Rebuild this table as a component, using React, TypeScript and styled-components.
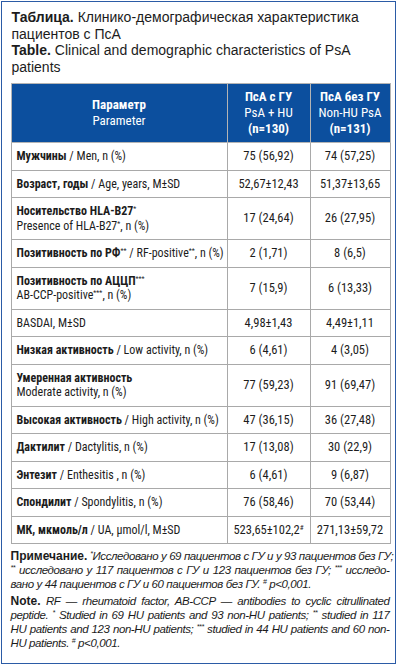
import React from 'react'
import styled, { createGlobalStyle } from 'styled-components'

const GlobalStyle = createGlobalStyle`
  html, body {
    margin: 0;
    padding: 0;
    background: #ffffff;
  }
  body {
    font-family: "Liberation Sans", Arial, sans-serif;
    color: #1c1c1c;
  }
`

const Frame = styled.div`
  box-sizing: border-box;
  width: 395px;
  margin: 1px 0 0 1px;
  border: 1.5px solid #2b5ba6;
  padding: 7px 4.5px 10px 8.5px;
`

const Caption = styled.p`
  margin: 0 0 0 1px;
  font-size: 14px;
  line-height: 16.5px;

  b {
    font-weight: 700;
  }
`

const DataTable = styled.table`
  width: 379px;
  margin-top: 8px;
  table-layout: fixed;
  border-collapse: collapse;
  font-family: "Roboto Condensed", "Open Sans", Roboto, sans-serif;
  font-stretch: 75%;
  font-size: 12.5px;
`

const HeadCell = styled.th`
  background: #0c4f9e;
  color: #ffffff;
  border: 1px solid #b4b4b4;
  padding: 5px 4px;
  font-size: 13px;
  line-height: 16px;
  font-weight: 400;
  text-align: center;
  vertical-align: middle;
  white-space: nowrap;

  b {
    font-weight: 700;
  }
`

const Row = styled.tr``

const LabelCell = styled.td`
  border: 1px solid #a9a9a9;
  padding: 6px 5px;
  font-size: 12px;
  line-height: 14.5px;
  text-align: left;
  vertical-align: middle;
  white-space: nowrap;

  b {
    font-weight: 700;
  }
`

const ValueCell = styled.td`
  border: 1px solid #a9a9a9;
  padding: 6px 2px;
  line-height: 14.5px;
  text-align: center;
  vertical-align: middle;
  white-space: nowrap;
`

const Star = styled.sup`
  font-size: 7px;
  line-height: 0;
  vertical-align: 4px;
`

const Notes = styled.div`
  width: 379px;
  margin-top: 5px;
  font-size: 11.5px;
  letter-spacing: -0.4px;
  line-height: 14px;
`

const NotePara = styled.div`
  margin-bottom: 3px;

  b {
    font-style: normal;
    font-weight: 700;
    font-size: 12px;
    letter-spacing: 0;
  }
`

const NoteLine = styled.div<{ $last?: boolean }>`
  font-style: italic;
  text-align: ${p => (p.$last ? 'left' : 'justify')};
  text-align-last: ${p => (p.$last ? 'left' : 'justify')};
  white-space: nowrap;
`

type DataRow = {
  label: React.ReactNode
  a: React.ReactNode
  b: React.ReactNode
}

const rows: DataRow[] = [
  { label: <><b>Мужчины</b> / Men, n (%)</>, a: '75 (56,92)', b: '74 (57,25)' },
  { label: <><b>Возраст, годы</b> / Age, years, M±SD</>, a: '52,67±12,43', b: '51,37±13,65' },
  {
    label: (
      <>
        <b>Носительство HLA-B27</b><Star>*</Star>
        <br />
        Presence of HLA-B27<Star>*</Star>, n (%)
      </>
    ),
    a: '17 (24,64)',
    b: '26 (27,95)',
  },
  {
    label: <><b>Позитивность по РФ</b><Star>**</Star> / RF-positive<Star>**</Star>, n (%)</>,
    a: '2 (1,71)',
    b: '8 (6,5)',
  },
  {
    label: (
      <>
        <b>Позитивность по АЦЦП</b><Star>***</Star>
        <br />
        AB-CCP-positive<Star>***</Star>, n (%)
      </>
    ),
    a: '7 (15,9)',
    b: '6 (13,33)',
  },
  { label: 'BASDAI, M±SD', a: '4,98±1,43', b: '4,49±1,11' },
  { label: <><b>Низкая активность</b> / Low activity, n (%)</>, a: '6 (4,61)', b: '4 (3,05)' },
  {
    label: (
      <>
        <b>Умеренная активность</b>
        <br />
        Moderate activity, n (%)
      </>
    ),
    a: '77 (59,23)',
    b: '91 (69,47)',
  },
  { label: <><b>Высокая активность</b> / High activity, n (%)</>, a: '47 (36,15)', b: '36 (27,48)' },
  { label: <><b>Дактилит</b> / Dactylitis, n (%)</>, a: '17 (13,08)', b: '30 (22,9)' },
  { label: <><b>Энтезит</b> / Enthesitis , n (%)</>, a: '6 (4,61)', b: '9 (6,87)' },
  { label: <><b>Спондилит</b> / Spondylitis, n (%)</>, a: '76 (58,46)', b: '70 (53,44)' },
  {
    label: <><b>МК, мкмоль/л</b> / UA, μmol/l, M±SD</>,
    a: <>523,65±102,2<Star>#</Star></>,
    b: '271,13±59,72',
  },
]

const App: React.FC = () => {
  return (
    <>
      <GlobalStyle />
      <Frame>
        <Caption>
          <b>Таблица.</b> Клинико-демографическая характеристика пациентов с ПсА
        </Caption>
        <Caption>
          <b>Table.</b> Clinical and demographic characteristics of PsA patients
        </Caption>

        <DataTable>
          <colgroup>
            <col style={{ width: 216 }} />
            <col style={{ width: 83 }} />
            <col style={{ width: 80 }} />
          </colgroup>
          <thead>
            <tr>
              <HeadCell>
                <b>Параметр</b>
                <br />
                Parameter
              </HeadCell>
              <HeadCell>
                <b>ПсА с ГУ</b>
                <br />
                PsA + HU
                <br />
                <b>(n=130)</b>
              </HeadCell>
              <HeadCell>
                <b>ПсА без ГУ</b>
                <br />
                Non-HU PsA
                <br />
                <b>(n=131)</b>
              </HeadCell>
            </tr>
          </thead>
          <tbody>
            {rows.map((r, i) => (
              <Row key={i}>
                <LabelCell>{r.label}</LabelCell>
                <ValueCell>{r.a}</ValueCell>
                <ValueCell>{r.b}</ValueCell>
              </Row>
            ))}
          </tbody>
        </DataTable>

        <Notes>
          <NotePara>
            <NoteLine>
              <b>Примечание.</b> <Star>*</Star>Исследовано у 69 пациентов с ГУ и у 93 пациентов без ГУ;
            </NoteLine>
            <NoteLine>
              <Star>**</Star> исследовано у 117 пациентов с ГУ и 123 пациентов без ГУ; <Star>***</Star> исследо-
            </NoteLine>
            <NoteLine $last>
              вано у 44 пациентов с ГУ и 60 пациентов без ГУ. <Star>#</Star> p&lt;0,001.
            </NoteLine>
          </NotePara>
          <NotePara>
            <NoteLine>
              <b>Note.</b> RF — rheumatoid factor, AB-CCP — antibodies to cyclic citrullinated
            </NoteLine>
            <NoteLine>
              peptide. <Star>*</Star> Studied in 69 HU patients and 93 non-HU patients; <Star>**</Star> studied in 117
            </NoteLine>
            <NoteLine>
              HU patients and 123 non-HU patients; <Star>***</Star> studied in 44 HU patients and 60 non-
            </NoteLine>
            <NoteLine $last>
              HU patients. <Star>#</Star> p&lt;0,001.
            </NoteLine>
          </NotePara>
        </Notes>
      </Frame>
    </>
  )
}

export default App
